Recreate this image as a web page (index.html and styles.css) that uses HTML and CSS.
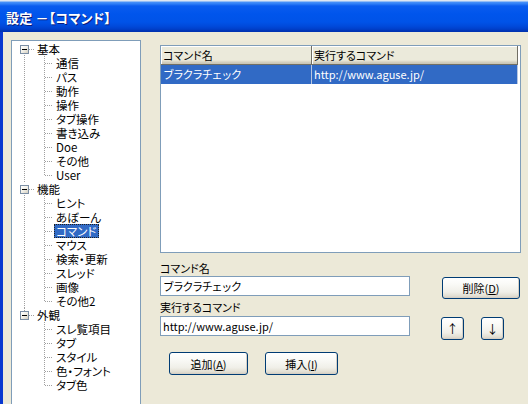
FILE: index.html
```html
<!DOCTYPE html>
<html lang="ja">
<head>
<meta charset="utf-8">
<title>設定 －【コマンド】</title>
<link rel="stylesheet" href="styles.css">
</head>
<body>
<div class="window">
  <div class="titlebar"><span class="title">設定 －【コマンド】</span></div>
  <div class="client">
    <ul class="tree">
      <li class="branch">
        <div class="row"><span class="exp"></span><span class="label">基本</span></div>
        <ul class="children">
          <li class="leaf"><span class="label">通信</span></li>
          <li class="leaf"><span class="label">パス</span></li>
          <li class="leaf"><span class="label">動作</span></li>
          <li class="leaf"><span class="label">操作</span></li>
          <li class="leaf"><span class="label">タブ操作</span></li>
          <li class="leaf"><span class="label">書き込み</span></li>
          <li class="leaf"><span class="label">Doe</span></li>
          <li class="leaf"><span class="label">その他</span></li>
          <li class="leaf"><span class="label">User</span></li>
        </ul>
      </li>
      <li class="branch">
        <div class="row"><span class="exp"></span><span class="label">機能</span></div>
        <ul class="children">
          <li class="leaf"><span class="label">ヒント</span></li>
          <li class="leaf"><span class="label">あぼーん</span></li>
          <li class="leaf"><span class="label sel">コマンド</span></li>
          <li class="leaf"><span class="label">マウス</span></li>
          <li class="leaf"><span class="label">検索・更新</span></li>
          <li class="leaf"><span class="label">スレッド</span></li>
          <li class="leaf"><span class="label">画像</span></li>
          <li class="leaf"><span class="label">その他2</span></li>
        </ul>
      </li>
      <li class="branch">
        <div class="row"><span class="exp"></span><span class="label">外観</span></div>
        <ul class="children">
          <li class="leaf"><span class="label">スレ覧項目</span></li>
          <li class="leaf"><span class="label">タブ</span></li>
          <li class="leaf"><span class="label">スタイル</span></li>
          <li class="leaf"><span class="label">色・フォント</span></li>
          <li class="leaf"><span class="label">タブ色</span></li>
        </ul>
      </li>
    </ul>

    <div class="panel">
      <div class="listview">
        <div class="lv-header">
          <div class="hcell c1">コマンド名</div>
          <div class="hcell c2">実行するコマンド</div>
        </div>
        <div class="lv-row selected">
          <div class="cell c1"><span class="cmd-name">ブラクラチェック</span></div>
          <div class="cell c2">http://www.aguse.jp/</div>
        </div>
      </div>

      <div class="caption first">コマンド名</div>
      <div class="line">
        <div class="textbox"><span class="cmd-name">ブラクラチェック</span></div>
        <button class="btn btn-del">削除(<u>D</u>)</button>
      </div>

      <div class="caption">実行するコマンド</div>
      <div class="line">
        <div class="textbox">http://www.aguse.jp/</div>
        <div class="arrows">
          <button class="btn btn-arrow">↑</button>
          <button class="btn btn-arrow">↓</button>
        </div>
      </div>

      <div class="actions">
        <button class="btn btn-add">追加(<u>A</u>)</button>
        <button class="btn btn-ins">挿入(<u>I</u>)</button>
      </div>
    </div>
  </div>
</div>
</body>
</html>
```

FILE: styles.css
```css
* { box-sizing: border-box; }

html, body {
  margin: 0;
  padding: 0;
  background: #ECE9D8;
}

body {
  font-family: "Noto Sans CJK JP", sans-serif;
  font-size: 11px;
  color: #000;
  font-feature-settings: "palt";
}

.window {
  width: 528px;
  height: 404px;
  overflow: hidden;
  display: flex;
  flex-direction: column;
}

/* Luna-style caption bar */
.titlebar {
  height: 32px;
  flex: none;
  background: linear-gradient(to bottom,
    #DCE6F2 0px, #DCE6F2 1px,
    #4A93F8 2px, #2C7CF6 4px,
    #0A5CEE 6px, #0055EC 14px,
    #0053E8 22px, #004ADB 26px,
    #0040CB 29px, #0033B2 31px, #0033B2 32px);
  display: flex;
  align-items: center;
  padding: 2px 0 0 6px;
}

.title {
  color: #fff;
  font-weight: bold;
  font-size: 13px;
  text-shadow: 1px 1px 0 #0A1C7A;
  letter-spacing: 0.2px;
}

.client {
  flex: 1;
  display: flex;
  align-items: flex-start;
  border-left: 3px solid #0838D0;
  background: #ECE9D8;
}

/* ---------- tree view ---------- */
.tree {
  list-style: none;
  margin: 8px 0 0 8px;
  padding: 1px 0 0 0;
  width: 130px;
  height: 400px;
  flex: none;
  border: 1px solid #7F9DB9;
  background: #fff;
  overflow: hidden;
  font-size: 11.5px;
}

.tree ul {
  list-style: none;
  margin: 0;
  padding: 0;
}

.branch {
  background-image: repeating-linear-gradient(to bottom, #A0A0A0 0 1px, transparent 1px 2px);
  background-repeat: no-repeat;
  background-position: 12px 7px;
  background-size: 1px 100%;
}

.branch:last-child {
  background-position: 12px 0;
  background-size: 1px 7px;
}

.row,
.leaf {
  height: 14px;
  display: flex;
  align-items: center;
  white-space: nowrap;
}

.row {
  background-image: repeating-linear-gradient(to right, #A0A0A0 0 1px, transparent 1px 2px);
  background-repeat: no-repeat;
  background-position: 17px 7px;
  background-size: 6px 1px;
}

.exp {
  width: 9px;
  height: 9px;
  margin-left: 8px;
  flex: none;
  border: 1px solid #7B8EA4;
  background: linear-gradient(135deg, #fff 0%, #F2F0E8 50%, #D4CFC0 100%);
  position: relative;
}

/* the minus sign inside the expander box */
.exp::after {
  content: "";
  position: absolute;
  left: 1px;
  top: 3px;
  width: 5px;
  height: 1px;
  background: #000;
}

.label {
  height: 14px;
  line-height: 14px;
  padding: 0 2px;
}

.row .label {
  margin-left: 6px;
}

.leaf {
  background-image:
    repeating-linear-gradient(to bottom, #A0A0A0 0 1px, transparent 1px 2px),
    repeating-linear-gradient(to right, #A0A0A0 0 1px, transparent 1px 2px);
  background-repeat: no-repeat;
  background-position: 32px 0, 33px 7px;
  background-size: 1px 14px, 8px 1px;
}

.leaf:last-child {
  background-size: 1px 8px, 8px 1px;
}

.leaf .label {
  margin-left: 42px;
}

.label.sel {
  background: #316AC5;
  color: #fff;
  outline: 1px dotted #202020;
  outline-offset: -1px;
}

/* ---------- right panel ---------- */
.panel {
  margin: 13px 0 0 19px;
  width: 361px;
  display: flex;
  flex-direction: column;
}

.listview {
  width: 361px;
  height: 208px;
  border: 1px solid #7F9DB9;
  background: #fff;
}

.lv-header,
.lv-row {
  display: flex;
  width: 357px;
}

.lv-header {
  height: 19px;
}

.hcell {
  height: 19px;
  line-height: 18px;
  padding-left: 2px;
  background: linear-gradient(to bottom, #EBEADB 0, #EBEADB 14px, #E2DECD 15px, #D6D2C2 16px, #CBC7B8 17px);
  border-right: 1px solid #716F64;
  border-bottom: 1px solid #716F64;
  box-shadow: inset 1px 1px 0 #fff;
  white-space: nowrap;
}

.lv-row {
  height: 19px;
}

.cell {
  height: 19px;
  line-height: 19px;
  padding-left: 2px;
  white-space: nowrap;
}

.c1 { width: 151px; }
.c2 { width: 206px; }

/* command names keep full-width katakana, set a little tight */
.cmd-name {
  font-feature-settings: normal;
  letter-spacing: -1.3px;
}

.lv-row.selected .cell {
  background: #316AC5;
  color: #fff;
  border-right: 1px solid #B7C6E0;
}

.caption {
  height: 15px;
  line-height: 15px;
  margin-top: 1px;
}

.caption.first {
  margin-top: 8px;
}

.line {
  display: flex;
  align-items: flex-start;
}

.textbox {
  width: 250px;
  height: 20px;
  line-height: 18px;
  margin-top: 1px;
  padding-left: 2px;
  border: 1px solid #7F9DB9;
  background: #fff;
  white-space: nowrap;
}

.caption.first + .line .textbox {
  margin-top: 0;
}

/* XP push buttons */
.btn {
  font-family: inherit;
  font-size: 11px;
  font-feature-settings: "palt";
  color: #000;
  padding: 0;
  border: 1px solid #003C74;
  border-radius: 3px;
  background: linear-gradient(to bottom, #FFFFFF 0%, #FAFAF7 30%, #F0EFE8 70%, #E3E0D4 88%, #D6D0C5 100%);
  box-shadow: inset -1px -1px 0 #D6D0C5;
}

.btn u {
  text-underline-offset: 1px;
}

.btn-del {
  width: 78px;
  height: 22px;
  margin: 1px 0 0 32px;
}

.arrows {
  display: flex;
  gap: 17px;
  margin: 2px 0 0 31px;
}

.btn-arrow {
  width: 23px;
  height: 23px;
  font-size: 12px;
}

.actions {
  display: flex;
  gap: 17px;
  margin: 12px 0 0 9px;
}

.btn-add {
  width: 79px;
  height: 23px;
}

.btn-ins {
  width: 73px;
  height: 23px;
}
```
